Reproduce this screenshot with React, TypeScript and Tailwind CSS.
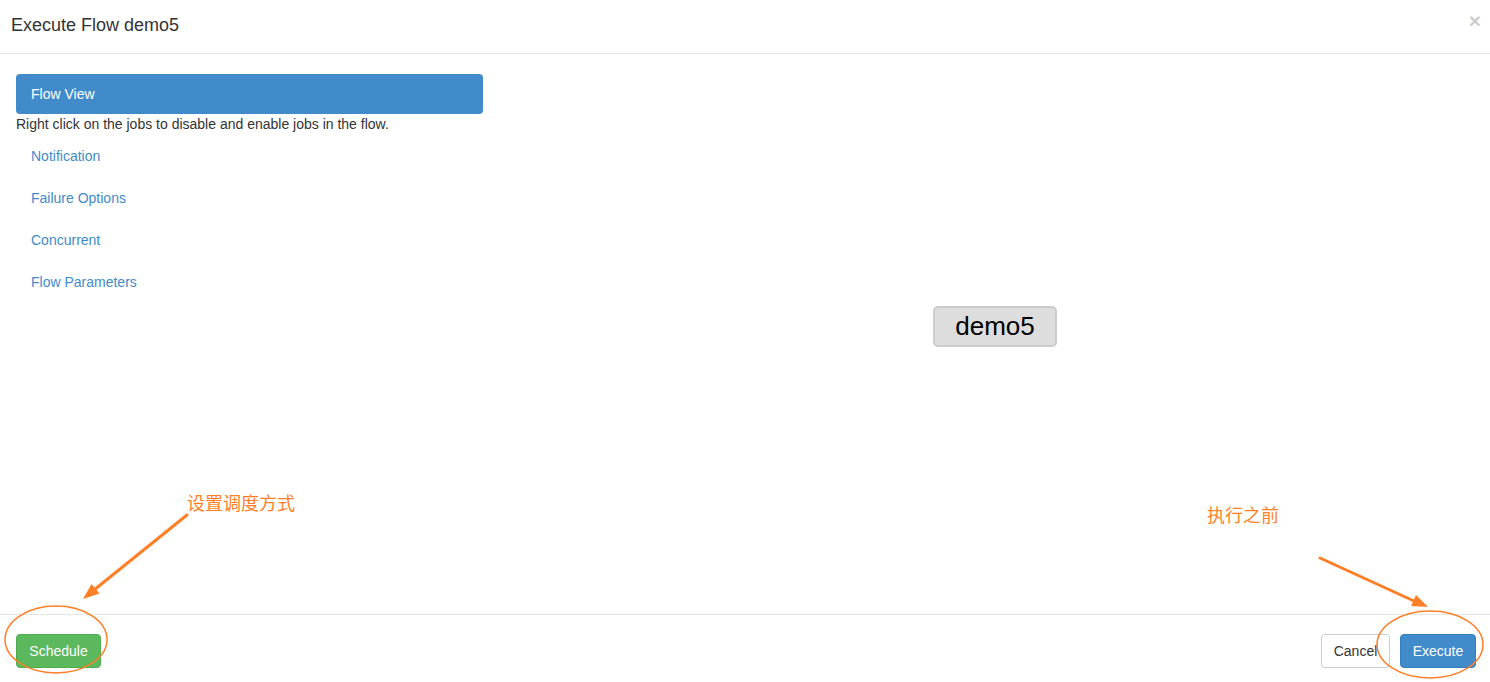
const FONT = { fontFamily: '"Liberation Sans", Arial, sans-serif' };
const CJK = { fontFamily: '"Liberation Sans", "Noto Sans CJK SC", sans-serif' };

const OPTIONS = ["Notification", "Failure Options", "Concurrent", "Flow Parameters"];

function Annotations() {
  return (
    <svg
      className="pointer-events-none absolute inset-0"
      width="1490"
      height="682"
      viewBox="0 0 1490 682"
      fill="none"
    >
      <line x1="187" y1="515" x2="94" y2="590" stroke="#ff7f27" strokeWidth="3" strokeLinecap="round" />
      <polygon points="83,599 99.5,593.5 91.5,584" fill="#ff7f27" />
      <line x1="1320" y1="558" x2="1414" y2="601" stroke="#ff7f27" strokeWidth="3" strokeLinecap="round" />
      <polygon points="1428,607 1411,606 1416,595" fill="#ff7f27" />
      <ellipse cx="56" cy="639.5" rx="51" ry="33.5" stroke="#ff7f27" strokeWidth="1.5" />
      <ellipse cx="1430" cy="644.5" rx="53" ry="33.5" stroke="#ff7f27" strokeWidth="1.5" />
    </svg>
  );
}

export default function App() {
  return (
    <div className="relative flex h-[682px] w-[1490px] flex-col bg-white text-[#333]" style={FONT}>
      {/* header */}
      <div className="flex h-[54px] items-center justify-between border-b border-[#e5e5e5] pl-[11px] pr-[9px]">
        <h4 className="-mt-[4px] text-[18px] leading-[20px]">Execute Flow demo5</h4>
        <span className="-mt-[12px] text-[21px] font-bold leading-none text-black opacity-20">×</span>
      </div>

      {/* body */}
      <div className="relative flex flex-1 px-4 pt-5">
        <div className="w-[467px]">
          <div className="flex h-10 items-center rounded bg-[#428bca] px-[15px] text-[14px] text-white">
            Flow View
          </div>
          <p className="text-[14px] leading-5">Right click on the jobs to disable and enable jobs in the flow.</p>
          <ul>
            {OPTIONS.map((o) => (
              <li key={o} className="mt-[2px] px-[15px] py-[10px] text-[14px] leading-5 text-[#428bca]">
                {o}
              </li>
            ))}
          </ul>
        </div>
        <div className="relative flex-1">
          <div className="absolute left-[450px] top-[232px] flex h-[41px] w-[124px] items-center justify-center rounded-[5px] border-2 border-[#cccccc] bg-[#dddddd] text-[26px] text-black">
            demo5
          </div>
          <span className="absolute left-[-296px] top-[418px] text-[18px] leading-6 text-[#ff7f27]" style={CJK}>
            设置调度方式
          </span>
          <span className="absolute left-[724px] top-[430px] text-[18px] leading-6 text-[#ff7f27]" style={CJK}>
            执行之前
          </span>
        </div>
      </div>

      {/* footer */}
      <div className="flex h-[68px] items-start justify-between border-t border-[#e5e5e5] pl-4 pr-[14px] pt-[19px]">
        <button className="h-[34px] w-[85px] rounded border border-[#4cae4c] bg-[#5cb85c] text-[14px] text-white">
          Schedule
        </button>
        <div className="flex gap-[10px]">
          <button className="h-[34px] w-[69px] rounded border border-[#ccc] bg-white text-[14px] text-[#333]">
            Cancel
          </button>
          <button className="h-[34px] w-[76px] rounded border border-[#357ebd] bg-[#428bca] text-[14px] text-white">
            Execute
          </button>
        </div>
      </div>

      <Annotations />
    </div>
  );
}
